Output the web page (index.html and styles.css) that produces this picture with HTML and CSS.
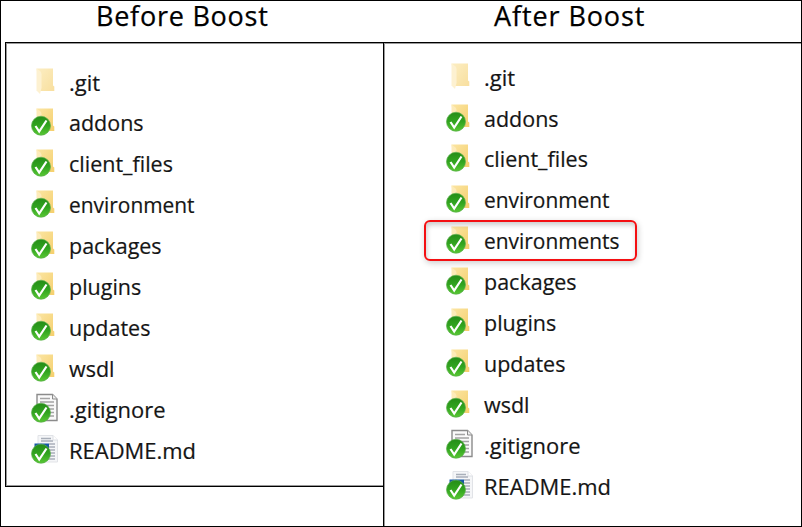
FILE: index.html
```
<!DOCTYPE html>
<html lang="en">
<head>
<meta charset="utf-8">
<title>Before and after Boost</title>
<link rel="stylesheet" href="styles.css">
</head>
<body>
<svg class="defs" aria-hidden="true">
  <defs>
    <linearGradient id="fold" x1="0" y1="0" x2="1" y2="1"><stop offset="0" stop-color="#fbe5a3"/><stop offset="1" stop-color="#f5cf6c"/></linearGradient>
    <linearGradient id="green" x1="0" y1="0" x2="0" y2="1"><stop offset="0" stop-color="#258d18"/><stop offset=".5" stop-color="#31a41f"/><stop offset="1" stop-color="#58c733"/></linearGradient>
    <symbol id="folder" viewBox="0 0 30 41">
      <path d="M6.500 5.500H23V22.500L24.300 23.500V28H10z" fill="url(#fold)"/>
      <path d="M6.500 5.500 10.500 8.500Q11.500 9.500 11.500 11V25L10 31 6.500 27.500z" fill="#fdebb9"/>
    </symbol>
    <symbol id="badge" viewBox="0 0 30 41">
      <circle cx="11" cy="22.700" r="9.500" fill="url(#green)" stroke="#59ad4b" stroke-width=".7"/>
      <path d="M5.500 23 9.200 28.500 16.500 17.500" fill="none" stroke="#fff" stroke-width="2.200"/>
    </symbol>
    <symbol id="doc" viewBox="0 0 30 41">
      <path d="M7 4.500H22.500L27 9V30.500H7z" fill="#fafafa" stroke="#8b8b8b" stroke-width="1.400"/>
      <path d="M22.500 4.500V9H27" fill="#eee" stroke="#8b8b8b"/>
      <path d="M10 8.500H20M10 12H24M10 15.500H24M10 19H24M10 22.500H24M10 26H24" stroke="#a4a4a4" stroke-width="1.300"/>
    </symbol>
    <symbol id="readme" viewBox="0 0 30 41">
      <path d="M8 4.500H23L27.500 9V31H8z" fill="#f5f6f8" stroke="#e1e3e7"/>
      <path d="M23 4.500V9H27.500" fill="#fff" stroke="#dcdfe4"/>
      <path d="M11 7.500H21M11 10H23M19 13H25M19 16H25M19 19H25M19 22H25M17 25H25M17 28H25" stroke="#a9afb9" stroke-width="1.500"/>
      <path d="M4.500 12.500H19V25H4.500z" fill="#1759a5"/>
    </symbol>
  </defs>
</svg>
<main class="board">
  <section class="column before">
    <h2 class="title">Before Boost</h2>
    <ul class="panel">
      <li class="row"><svg class="icon faded"><use href="#folder"/></svg><span class="loose">.git</span></li>
      <li class="row"><svg class="icon"><use href="#folder"/><use href="#badge"/></svg><span class="wide">addons</span></li>
      <li class="row"><svg class="icon"><use href="#folder"/><use href="#badge"/></svg><span class="wide">client_files</span></li>
      <li class="row"><svg class="icon"><use href="#folder"/><use href="#badge"/></svg><span>environment</span></li>
      <li class="row"><svg class="icon"><use href="#folder"/><use href="#badge"/></svg><span class="wide">packages</span></li>
      <li class="row"><svg class="icon"><use href="#folder"/><use href="#badge"/></svg><span class="wide">plugins</span></li>
      <li class="row"><svg class="icon"><use href="#folder"/><use href="#badge"/></svg><span class="wide">updates</span></li>
      <li class="row"><svg class="icon"><use href="#folder"/><use href="#badge"/></svg><span class="wide">wsdl</span></li>
      <li class="row"><svg class="icon"><use href="#doc"/><use href="#badge"/></svg><span class="loose">.gitignore</span></li>
      <li class="row"><svg class="icon"><use href="#readme"/><use href="#badge"/></svg><span class="loose">README.md</span></li>
    </ul>
  </section>
  <section class="column after">
    <h2 class="title">After Boost</h2>
    <ul class="panel">
      <li class="row"><svg class="icon faded"><use href="#folder"/></svg><span class="loose">.git</span></li>
      <li class="row"><svg class="icon"><use href="#folder"/><use href="#badge"/></svg><span class="wide">addons</span></li>
      <li class="row"><svg class="icon"><use href="#folder"/><use href="#badge"/></svg><span class="wide">client_files</span></li>
      <li class="row"><svg class="icon"><use href="#folder"/><use href="#badge"/></svg><span>environment</span></li>
      <li class="row marked"><svg class="icon"><use href="#folder"/><use href="#badge"/></svg><span>environments</span></li>
      <li class="row"><svg class="icon"><use href="#folder"/><use href="#badge"/></svg><span class="wide">packages</span></li>
      <li class="row"><svg class="icon"><use href="#folder"/><use href="#badge"/></svg><span class="wide">plugins</span></li>
      <li class="row"><svg class="icon"><use href="#folder"/><use href="#badge"/></svg><span class="wide">updates</span></li>
      <li class="row"><svg class="icon"><use href="#folder"/><use href="#badge"/></svg><span class="wide">wsdl</span></li>
      <li class="row"><svg class="icon"><use href="#doc"/><use href="#badge"/></svg><span class="loose">.gitignore</span></li>
      <li class="row"><svg class="icon"><use href="#readme"/><use href="#badge"/></svg><span class="loose">README.md</span></li>
    </ul>
  </section>
</main>
</body>
</html>
```
FILE: styles.css
```
* { box-sizing: border-box; }
body { margin: 0; background: #fff; color: #000; font-family: "Open Sans", "Noto Sans", sans-serif; }
.defs { position: absolute; width: 0; height: 0; }
.board { display: grid; grid-template-columns: 378px 1fr; width: 802px; height: 527px; padding-left: 4px; border: 1px solid #000; }
.column { display: flex; flex-direction: column; min-width: 0; }
.title { margin: 0; height: 41px; padding-left: 91px; font-size: 27px; font-weight: 400; line-height: 30px; letter-spacing: .75px; white-space: nowrap; -webkit-text-stroke: .25px #000; }
.after .title { padding-left: 111px; letter-spacing: .9px; }
.panel { list-style: none; margin: 0; border-top: 1px solid #000; border-left: 1px solid #000; box-shadow: inset 1px 1px #999; }
.before .panel { height: 445px; padding: 19.600px 0 0 24px; border-bottom: 1px solid #000; box-shadow: inset 1px 1px #999, inset 0 -1px #999; }
.after .panel { flex: 1; padding: 14.700px 0 0 61px; }
.row { position: relative; display: flex; height: 40.900px; font-size: 22px; line-height: 39px; color: #151515; white-space: nowrap; }
.icon { flex: none; width: 30px; height: 41px; margin-right: 9px; }
.faded { opacity: .65; }
.row span { transform: scaleX(.95); transform-origin: left; -webkit-text-stroke: .2px #151515; }
.row .wide { transform: scaleX(.977); }
.row .loose { transform: scaleX(.998); }
.marked::before { content: ""; position: absolute; box-sizing: border-box; left: -21px; top: -1px; width: 213px; height: 41px; border: 2px solid #f40f12; border-radius: 6px; box-shadow: 1px 2px 6px #0003, inset 1px 3px 5px #0003; }
```
